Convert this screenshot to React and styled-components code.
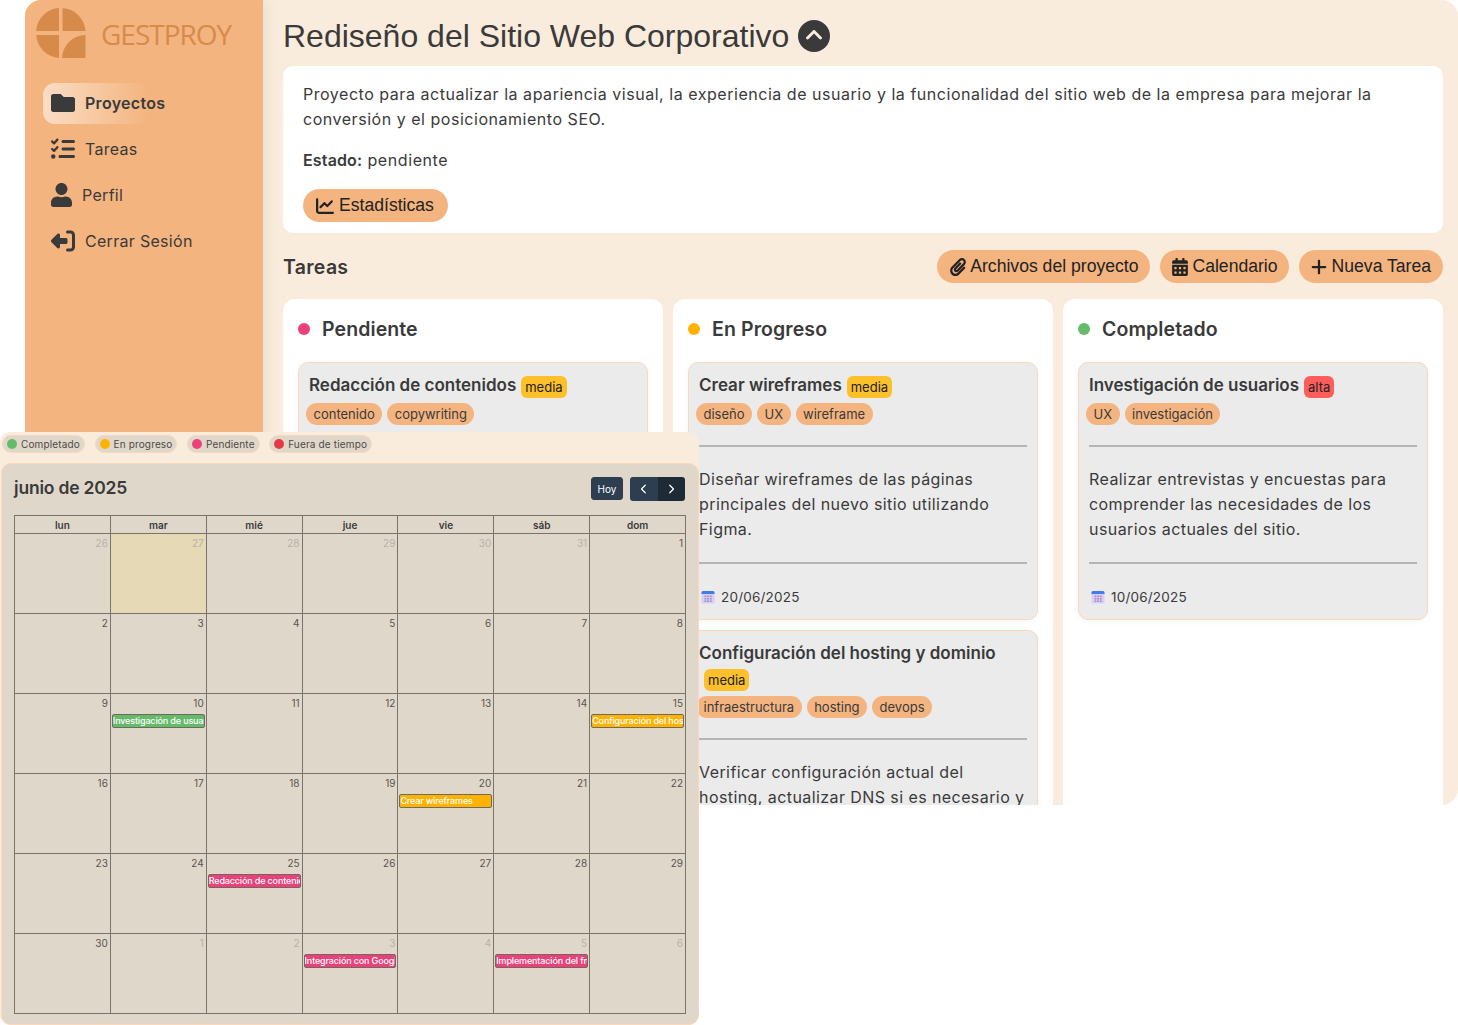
import React from 'react'
import styled, { createGlobalStyle } from 'styled-components'
import { FaFolder, FaUser, FaPaperclip, FaCalendarAlt } from 'react-icons/fa'
import {
  FaListCheck,
  FaRightFromBracket,
  FaCircleChevronUp,
  FaChevronLeft,
  FaChevronRight,
  FaChartLine,
  FaPlus
} from 'react-icons/fa6'

const UI_FONT = `Inter, "Open Sans", sans-serif`
const BTN_FONT = `"Liberation Sans", Arial, sans-serif`

const GlobalStyle = createGlobalStyle`
  html, body {
    margin: 0;
    padding: 0;
    background: #fff;
    font-family: ${UI_FONT};
    color: #3a3a3a;
  }
  * { box-sizing: border-box; }
`

const Page = styled.div`
  position: relative;
  width: 1458px;
  height: 1025px;
  overflow: hidden;
  padding-left: 25px;
`

const Shell = styled.div`
  display: flex;
  height: 805px;
  border-radius: 16px;
  overflow: hidden;
  background: #faecdc;
`

const Sidebar = styled.aside`
  width: 238px;
  flex-shrink: 0;
  background: #f4b47f;
  box-shadow: 4px 0 14px rgba(0, 0, 0, 0.06);
  padding: 8px 18px 0 11px;
  z-index: 1;
`

const Brand = styled.div`
  display: flex;
  align-items: center;
  height: 50px;
  margin-bottom: 25px;
  gap: 15px;
`

const BrandName = styled.span`
  font-family: "Open Sans", sans-serif;
  font-size: 28px;
  letter-spacing: -1px;
  color: #d68b4b;
  margin-top: 2px;
`

const Nav = styled.nav`
  display: flex;
  flex-direction: column;
  gap: 5px;
  padding-left: 7px;
`

const NavItem = styled.a`
  display: flex;
  align-items: center;
  height: 41px;
  padding-left: 8px;
  padding-bottom: 1px;
  gap: 10px;
  border-radius: 12px;
  font-size: 16px;
  font-weight: ${props => (props.$active ? 600 : 400)};
  letter-spacing: 0.3px;
  background: ${props =>
    props.$active
      ? 'linear-gradient(90deg, rgba(255,255,255,0.55) 0%, rgba(255,255,255,0) 52%)'
      : 'transparent'};

  svg {
    width: ${props => props.$iconSize || 24}px;
    height: 24px;
    flex-shrink: 0;
    color: #3a3a3a;
  }
`

const FlippedLogout = styled(FaRightFromBracket)`
  transform: scaleX(-1);
`

const Main = styled.main`
  flex: 1;
  min-width: 0;
  padding: 0 15px 0 20px;
  overflow: hidden;
`

const TitleRow = styled.div`
  display: flex;
  align-items: center;
  gap: 9px;
  height: 66px;
  padding-top: 6px;
`

const Title = styled.h1`
  margin: 0;
  font-family: ${BTN_FONT};
  font-size: 32px;
  font-weight: 400;
  color: #3a3a3a;
`

const Collapse = styled(FaCircleChevronUp)`
  width: 32px;
  height: 32px;
  color: #3a3a3a;
`

const InfoCard = styled.section`
  background: #fff;
  border-radius: 10px;
  padding: 16px 20px 11px;
  margin-bottom: 17px;
`

const Description = styled.p`
  margin: 0 0 16px;
  font-size: 16px;
  line-height: 25px;
  letter-spacing: 0.53px;
`

const Status = styled.p`
  margin: 0 0 16px;
  font-size: 16px;
  line-height: 25px;
  letter-spacing: 0.6px;

  b {
    font-weight: 600;
    letter-spacing: 0.15px;
  }
`

const PillButton = styled.button`
  display: inline-flex;
  align-items: center;
  gap: ${props => props.$gap || 3}px;
  height: 33px;
  padding: 0 ${props => props.$right || 12}px 0 ${props => props.$left || 11}px;
  border: none;
  border-radius: 17px;
  background: #f4b47f;
  color: #222;
  font-family: ${BTN_FONT};
  font-size: 17.6px;

  svg {
    width: 18px;
    height: 18px;
  }
`

const SectionHead = styled.div`
  display: flex;
  align-items: center;
  justify-content: space-between;
  height: 33px;
  margin-bottom: 16px;
`

const SectionTitle = styled.h2`
  margin: 0;
  font-size: 19.5px;
  font-weight: 600;
  letter-spacing: 0.3px;
`

const Actions = styled.div`
  display: flex;
  gap: 10px;
`

const Board = styled.div`
  display: grid;
  grid-template-columns: repeat(3, 380px);
  gap: 10px;
`

const Column = styled.section`
  background: #fff;
  border-radius: 12px;
  padding: 15px;
`

const ColumnHead = styled.h3`
  display: flex;
  align-items: center;
  gap: 12px;
  height: 30px;
  margin: 0 0 18px;
  font-size: 19.5px;
  font-weight: 600;
  letter-spacing: 0.1px;
`

const Dot = styled.span`
  width: ${props => props.$size || 12}px;
  height: ${props => props.$size || 12}px;
  border-radius: 50%;
  background: ${props => props.$color};
  flex-shrink: 0;
`

const TaskCard = styled.article`
  background: #ebebeb;
  border: 1px solid #fad8bb;
  border-radius: 10px;
  padding: 12px 10px;
  margin-bottom: 10px;
  box-shadow: 0 2px 6px rgba(0, 0, 0, 0.04);
`

const TaskHead = styled.div`
  display: flex;
  flex-wrap: wrap;
  row-gap: 4px;
  margin-bottom: 5px;
`

const TaskTitle = styled.h4`
  margin: 0;
  font-size: 17px;
  line-height: 21px;
  font-weight: 600;
`

const Priority = styled.span`
  display: inline-flex;
  align-items: center;
  height: 22px;
  margin: 1px 0 0 5px;
  padding: 0 4px;
  border-radius: 6px;
  font-size: 13px;
  color: #222;
  background: ${props => (props.$level === 'alta' ? '#ff5c5c' : '#fcc02a')};
`

const Tags = styled.div`
  display: flex;
  gap: 5px;
  margin-left: -3px;
`

const Tag = styled.span`
  display: inline-flex;
  align-items: center;
  height: 22px;
  padding: 0 7.5px;
  border-radius: 11px;
  background: #f4b47f;
  font-size: 13px;
`

const Rule = styled.hr`
  height: 2px;
  margin: 20px 0;
  border: none;
  background: #b5b5b5;
`

const TaskText = styled.p`
  margin: 0;
  font-size: 16px;
  line-height: 25px;
  letter-spacing: 0.42px;
`

const DueDate = styled.div`
  display: flex;
  align-items: center;
  gap: 6px;
  height: 20px;
  margin-top: 23px;
  padding-left: 2px;
  font-size: 13.5px;
  letter-spacing: 0.2px;
`

const CalendarWindow = styled.div`
  position: absolute;
  left: 0;
  top: 432px;
  z-index: 2;
  width: 699px;
  height: 593px;
  padding: 3px 0 0 1px;
  background: #faecdc;
  border-radius: 10px;
`

const Legend = styled.div`
  display: flex;
  gap: 9.5px;
  height: 28px;
  padding-left: 1px;
`

const LegendChip = styled.span`
  display: inline-flex;
  align-items: center;
  gap: 4px;
  height: 18px;
  padding: 0 4px;
  border: 1px solid #fad8bb;
  border-radius: 9px;
  background: #e0d7cb;
  font-size: 10px;
  letter-spacing: 0.15px;
  color: #4d4a45;
`

const CalendarPanel = styled.div`
  height: 562px;
  padding: 13px 13px 0 12px;
  background: #e0d7cb;
  border: 1px solid #fad8bb;
  border-radius: 10px;
`

const CalendarBar = styled.div`
  display: flex;
  align-items: center;
  justify-content: space-between;
  height: 24px;
  margin-bottom: 14px;
`

const MonthTitle = styled.h2`
  margin: 0 0 3px;
  font-size: 17.5px;
  font-weight: 600;
  letter-spacing: -0.2px;
`

const BarControls = styled.div`
  display: flex;
  gap: 7px;
`

const TodayButton = styled.button`
  width: 32px;
  height: 23px;
  padding: 0;
  border: 1px solid #2c3e50;
  border-radius: 3px;
  background: #2c3e50;
  color: #fff;
  font-family: ${UI_FONT};
  font-size: 10px;
`

const ArrowGroup = styled.div`
  display: flex;
  width: 55px;
  height: 24px;
  border-radius: 3px;
  overflow: hidden;
`

const ArrowButton = styled.button`
  flex: 1;
  display: flex;
  align-items: center;
  justify-content: center;
  padding: 0;
  border: none;
  background: ${props => (props.$dark ? '#1e2b37' : '#2c3e50')};
  color: #fff;

  svg {
    width: 10px;
    height: 10px;
  }
`

const CalendarGrid = styled.div`
  display: grid;
  grid-template-columns: repeat(7, 1fr);
  grid-auto-rows: 80px;
  grid-template-rows: 18px;
  width: 672px;
  border-top: 1px solid #7a736b;
  border-left: 1px solid #7a736b;
`

const WeekDay = styled.div`
  display: flex;
  align-items: center;
  justify-content: center;
  border-right: 1px solid #7a736b;
  border-bottom: 1px solid #7a736b;
  font-size: 10px;
  font-weight: 600;
`

const DayCell = styled.div`
  min-width: 0;
  padding: 3px 2px 0;
  border-right: 1px solid #7a736b;
  border-bottom: 1px solid #7a736b;
  background: ${props => (props.$today ? '#e6d9b5' : 'transparent')};
`

const DayNumber = styled.div`
  height: 13px;
  margin-bottom: 4px;
  text-align: right;
  font-size: 10px;
  line-height: 13px;
  color: ${props => (props.$muted ? '#b9b1a6' : '#59544e')};
`

const CalEvent = styled.div`
  height: 14px;
  margin: 0 -1px;
  border: 1px solid #6e6a62;
  border-radius: 2px;
  background: ${props => props.$color};
  color: #fff;
  font-size: 9px;
  font-weight: 500;
  line-height: 12px;
  letter-spacing: -0.15px;
  white-space: nowrap;
  overflow: hidden;
`

const STATUS_COLORS = {
  done: '#66bb6a',
  progress: '#ffb300',
  pending: '#ec407a',
  late: '#e53945'
}

const LogoMark = () => (
  <svg width="50" height="50" viewBox="0 0 50 50" fill="#d68b4b">
    <path d="M23 0V23H0.2V21.5A24.5 24.5 0 0 1 23 0Z" />
    <path d="M26.5 0A24.5 24.5 0 0 1 49.5 23H26.5Z" />
    <path d="M0.2 27H23V50A24.5 24.5 0 0 1 0.2 27Z" />
    <path d="M26 50A24 24 0 0 1 49.5 27V49A1 1 0 0 1 48.5 50Z" />
  </svg>
)

const DateIcon = () => (
  <svg width="14" height="14" viewBox="0 0 14 14">
    <rect x="0.5" y="1" width="13" height="12.5" rx="1.5" fill="#dccdf0" />
    <path d="M0.5 4V2.5A1.5 1.5 0 0 1 2 1H12A1.5 1.5 0 0 1 13.5 2.5V4Z" fill="#3f7cf0" />
    <g fill="#9c8fd0">
      <rect x="3.5" y="5.5" width="1.8" height="1.6" />
      <rect x="6.2" y="5.5" width="1.8" height="1.6" />
      <rect x="8.9" y="5.5" width="1.8" height="1.6" />
      <rect x="3.5" y="8" width="1.8" height="1.6" />
      <rect x="6.2" y="8" width="1.8" height="1.6" />
      <rect x="8.9" y="8" width="1.8" height="1.6" />
      <rect x="3.5" y="10.4" width="1.8" height="1.6" />
      <rect x="6.2" y="10.4" width="1.8" height="1.6" />
      <rect x="8.9" y="10.4" width="1.8" height="1.6" />
    </g>
  </svg>
)

const COLUMNS = [
  {
    name: 'Pendiente',
    color: STATUS_COLORS.pending,
    tasks: [
      {
        title: 'Redacción de contenidos',
        priority: 'media',
        tags: ['contenido', 'copywriting'],
        text: 'Redactar los textos de las páginas principales del sitio con enfoque en SEO.',
        date: '25/06/2025'
      }
    ]
  },
  {
    name: 'En Progreso',
    color: STATUS_COLORS.progress,
    tasks: [
      {
        title: 'Crear wireframes',
        priority: 'media',
        tags: ['diseño', 'UX', 'wireframe'],
        text: 'Diseñar wireframes de las páginas principales del nuevo sitio utilizando Figma.',
        date: '20/06/2025'
      },
      {
        title: 'Configuración del hosting y dominio',
        priority: 'media',
        tags: ['infraestructura', 'hosting', 'devops'],
        text: 'Verificar configuración actual del hosting, actualizar DNS si es necesario y preparar el entorno.',
        date: '15/06/2025'
      }
    ]
  },
  {
    name: 'Completado',
    color: STATUS_COLORS.done,
    tasks: [
      {
        title: 'Investigación de usuarios',
        priority: 'alta',
        tags: ['UX', 'investigación'],
        text: 'Realizar entrevistas y encuestas para comprender las necesidades de los usuarios actuales del sitio.',
        date: '10/06/2025'
      }
    ]
  }
]

const LEGEND = [
  ['Completado', STATUS_COLORS.done],
  ['En progreso', STATUS_COLORS.progress],
  ['Pendiente', STATUS_COLORS.pending],
  ['Fuera de tiempo', STATUS_COLORS.late]
]

const WEEK_DAYS = ['lun', 'mar', 'mié', 'jue', 'vie', 'sáb', 'dom']

// 6 weeks from 26 May to 6 July
const CALENDAR_DAYS = [
  ...[26, 27, 28, 29, 30, 31].map(n => ({ n, muted: true })),
  ...Array.from({ length: 30 }, (_, i) => ({ n: i + 1 })),
  ...[1, 2, 3, 4, 5, 6].map(n => ({ n, muted: true }))
]

const EVENTS = {
  '10': ['Investigación de usuarios', STATUS_COLORS.done],
  '15': ['Configuración del hosting y dominio', STATUS_COLORS.progress],
  '20': ['Crear wireframes', STATUS_COLORS.progress],
  '25': ['Redacción de contenidos', STATUS_COLORS.pending],
  'm3': ['Integración con Google Analytics', STATUS_COLORS.pending],
  'm5': ['Implementación del frontend', STATUS_COLORS.pending]
}

const Task = ({ task }) => (
  <TaskCard>
    <TaskHead>
      <TaskTitle>{task.title}</TaskTitle>
      <Priority $level={task.priority}>{task.priority}</Priority>
    </TaskHead>
    <Tags>
      {task.tags.map(tag => (
        <Tag key={tag}>{tag}</Tag>
      ))}
    </Tags>
    <Rule />
    <TaskText>{task.text}</TaskText>
    <Rule />
    <DueDate>
      <DateIcon />
      {task.date}
    </DueDate>
  </TaskCard>
)

const CalendarPopup = () => (
  <CalendarWindow>
    <Legend>
      {LEGEND.map(([label, color]) => (
        <LegendChip key={label}>
          <Dot $size={10} $color={color} />
          {label}
        </LegendChip>
      ))}
    </Legend>
    <CalendarPanel>
      <CalendarBar>
        <MonthTitle>junio de 2025</MonthTitle>
        <BarControls>
          <TodayButton>Hoy</TodayButton>
          <ArrowGroup>
            <ArrowButton>
              <FaChevronLeft />
            </ArrowButton>
            <ArrowButton $dark>
              <FaChevronRight />
            </ArrowButton>
          </ArrowGroup>
        </BarControls>
      </CalendarBar>
      <CalendarGrid>
        {WEEK_DAYS.map(day => (
          <WeekDay key={day}>{day}</WeekDay>
        ))}
        {CALENDAR_DAYS.map(({ n, muted }, i) => {
          const event = EVENTS[`${muted ? 'm' : ''}${n}`]
          return (
            <DayCell key={i} $today={i === 1}>
              <DayNumber $muted={muted}>{n}</DayNumber>
              {event && <CalEvent $color={event[1]}>{event[0]}</CalEvent>}
            </DayCell>
          )
        })}
      </CalendarGrid>
    </CalendarPanel>
  </CalendarWindow>
)

export default function App() {
  return (
    <Page>
      <GlobalStyle />
      <Shell>
        <Sidebar>
          <Brand>
            <LogoMark />
            <BrandName>GESTPROY</BrandName>
          </Brand>
          <Nav>
            <NavItem $active>
              <FaFolder />
              Proyectos
            </NavItem>
            <NavItem>
              <FaListCheck />
              Tareas
            </NavItem>
            <NavItem $iconSize={21}>
              <FaUser />
              Perfil
            </NavItem>
            <NavItem>
              <FlippedLogout />
              Cerrar Sesión
            </NavItem>
          </Nav>
        </Sidebar>
        <Main>
          <TitleRow>
            <Title>Rediseño del Sitio Web Corporativo</Title>
            <Collapse />
          </TitleRow>
          <InfoCard>
            <Description>
              Proyecto para actualizar la apariencia visual, la experiencia de usuario y la
              funcionalidad del sitio web de la empresa para mejorar la conversión y el
              posicionamiento SEO.
            </Description>
            <Status>
              <b>Estado:</b> pendiente
            </Status>
            <PillButton $left={13} $right={14} $gap={5}>
              <FaChartLine />
              Estadísticas
            </PillButton>
          </InfoCard>
          <SectionHead>
            <SectionTitle>Tareas</SectionTitle>
            <Actions>
              <PillButton $left={12}>
                <FaPaperclip />
                Archivos del proyecto
              </PillButton>
              <PillButton $right={11}>
                <FaCalendarAlt />
                Calendario
              </PillButton>
              <PillButton $gap={4}>
                <FaPlus />
                Nueva Tarea
              </PillButton>
            </Actions>
          </SectionHead>
          <Board>
            {COLUMNS.map(column => (
              <Column key={column.name}>
                <ColumnHead>
                  <Dot $color={column.color} />
                  {column.name}
                </ColumnHead>
                {column.tasks.map(task => (
                  <Task key={task.title} task={task} />
                ))}
              </Column>
            ))}
          </Board>
        </Main>
      </Shell>
      <CalendarPopup />
    </Page>
  )
}
